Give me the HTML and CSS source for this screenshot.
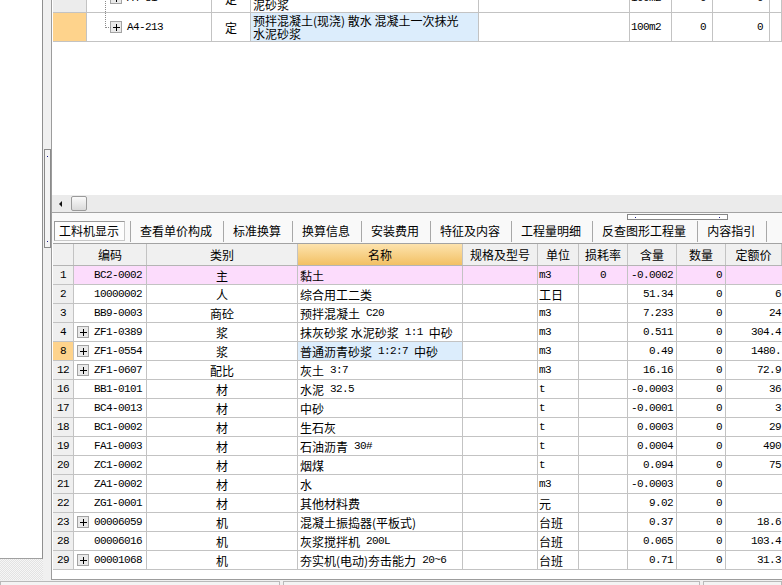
FILE: index.html
```html
<!DOCTYPE html>
<html lang="zh-CN">
<head>
<meta charset="utf-8">
<title>工料机显示</title>
<link rel="stylesheet" href="styles.css">
</head>
<body>
<div class="app">
  <div class="side">
    <div class="side-panel"></div>
    <div class="side-foot"></div>
  </div>
  <div class="split"><div class="grip-v"></div></div>
  <div class="main">
    <div class="upper">
      <div class="ugrid">
        <div class="urow">
          <div class="uc un"></div>
          <div class="uc ucode tree-full"><svg class="pb" width="12" height="12" viewBox="0 0 12 12"><rect x=".5" y=".5" width="11" height="11" fill="#e9e9e9" stroke="#a3a3a3"/><path d="M3 6.5h7M6.5 3v7" stroke="#000"/></svg><span class="m">A4-81</span></div>
          <div class="uc ut">定</div>
          <div class="uc unm">预拌混凝土(现浇) 台阶 混凝土一次抹光水<br>泥砂浆</div>
          <div class="uc"></div>
          <div class="uc uu m">100m2</div>
          <div class="uc ur m">0</div>
          <div class="uc ur m">0</div>
          <div class="uc"></div>
        </div>
        <div class="urow sel">
          <div class="uc un"></div>
          <div class="uc ucode tree-last"><svg class="pb" width="12" height="12" viewBox="0 0 12 12"><rect x=".5" y=".5" width="11" height="11" fill="#e9e9e9" stroke="#a3a3a3"/><path d="M3 6.5h7M6.5 3v7" stroke="#000"/></svg><span class="m">A4-213</span></div>
          <div class="uc ut">定</div>
          <div class="uc unm">预拌混凝土(现浇) 散水 混凝土一次抹光<br>水泥砂浆</div>
          <div class="uc"></div>
          <div class="uc uu m">100m2</div>
          <div class="uc ur m">0</div>
          <div class="uc ur m">0</div>
          <div class="uc"></div>
        </div>
      </div>
    </div>
    <div class="hscroll"><span class="arrow"></span><span class="thumb"></span></div>
    <div class="tabs">
      <div class="tab on">工料机显示</div><i class="sep"></i>
      <div class="tab">查看单价构成</div><i class="sep"></i>
      <div class="tab">标准换算</div><i class="sep"></i>
      <div class="tab">换算信息</div><i class="sep"></i>
      <div class="tab">安装费用</div><i class="sep"></i>
      <div class="tab">特征及内容</div><i class="sep"></i>
      <div class="tab">工程量明细</div><i class="sep"></i>
      <div class="tab">反查图形工程量</div><i class="sep"></i>
      <div class="tab">内容指引</div><i class="sep"></i>
      <div class="grip-h"></div>
    </div>
    <div class="lgrid">
      <div class="lhead">
        <div class="h"></div>
        <div class="h">编码</div>
        <div class="h">类别</div>
        <div class="h hot">名称</div>
        <div class="h">规格及型号</div>
        <div class="h">单位</div>
        <div class="h">损耗率</div>
        <div class="h">含量</div>
        <div class="h">数量</div>
        <div class="h">定额价</div>
      </div>

      <div class="lrow pink">
        <div class="c n m">1</div>
        <div class="c code"><i class="slot"></i><span class="m">BC2-0002</span></div>
        <div class="c t">主</div>
        <div class="c nm">黏土</div>
        <div class="c"></div>
        <div class="c u m">m3</div>
        <div class="c z m">0</div>
        <div class="c r m">-0.0002</div>
        <div class="c r m">0</div>
        <div class="c rr m"></div>
      </div>
      <div class="lrow">
        <div class="c n m">2</div>
        <div class="c code"><i class="slot"></i><span class="m">10000002</span></div>
        <div class="c t">人</div>
        <div class="c nm">综合用工二类</div>
        <div class="c"></div>
        <div class="c u">工日</div>
        <div class="c z m"></div>
        <div class="c r m">51.34</div>
        <div class="c r m">0</div>
        <div class="c rr m">6</div>
      </div>
      <div class="lrow">
        <div class="c n m">3</div>
        <div class="c code"><i class="slot"></i><span class="m">BB9-0003</span></div>
        <div class="c t">商砼</div>
        <div class="c nm">预拌混凝土<span class="m">&nbsp;C20</span></div>
        <div class="c"></div>
        <div class="c u m">m3</div>
        <div class="c z m"></div>
        <div class="c r m">7.233</div>
        <div class="c r m">0</div>
        <div class="c rr m">24</div>
      </div>
      <div class="lrow">
        <div class="c n m">4</div>
        <div class="c code"><svg class="pb" width="12" height="12" viewBox="0 0 12 12"><rect x=".5" y=".5" width="11" height="11" fill="#e9e9e9" stroke="#a3a3a3"/><path d="M3 6.5h7M6.5 3v7" stroke="#000"/></svg><span class="m">ZF1-0389</span></div>
        <div class="c t">浆</div>
        <div class="c nm">抹灰砂浆 水泥砂浆<span class="m">&nbsp;1:1&nbsp;</span>中砂</div>
        <div class="c"></div>
        <div class="c u m">m3</div>
        <div class="c z m"></div>
        <div class="c r m">0.511</div>
        <div class="c r m">0</div>
        <div class="c rr m">304.4</div>
      </div>
      <div class="lrow cur">
        <div class="c n m">8</div>
        <div class="c code"><svg class="pb" width="12" height="12" viewBox="0 0 12 12"><rect x=".5" y=".5" width="11" height="11" fill="#e9e9e9" stroke="#a3a3a3"/><path d="M3 6.5h7M6.5 3v7" stroke="#000"/></svg><span class="m">ZF1-0554</span></div>
        <div class="c t">浆</div>
        <div class="c nm">普通沥青砂浆<span class="m">&nbsp;1:2:7&nbsp;</span>中砂</div>
        <div class="c"></div>
        <div class="c u m">m3</div>
        <div class="c z m"></div>
        <div class="c r m">0.49</div>
        <div class="c r m">0</div>
        <div class="c rr m">1480.</div>
      </div>
      <div class="lrow">
        <div class="c n m">12</div>
        <div class="c code"><svg class="pb" width="12" height="12" viewBox="0 0 12 12"><rect x=".5" y=".5" width="11" height="11" fill="#e9e9e9" stroke="#a3a3a3"/><path d="M3 6.5h7M6.5 3v7" stroke="#000"/></svg><span class="m">ZF1-0607</span></div>
        <div class="c t">配比</div>
        <div class="c nm">灰土<span class="m">&nbsp;3:7</span></div>
        <div class="c"></div>
        <div class="c u m">m3</div>
        <div class="c z m"></div>
        <div class="c r m">16.16</div>
        <div class="c r m">0</div>
        <div class="c rr m">72.9</div>
      </div>
      <div class="lrow">
        <div class="c n m">16</div>
        <div class="c code"><i class="slot"></i><span class="m">BB1-0101</span></div>
        <div class="c t">材</div>
        <div class="c nm">水泥<span class="m">&nbsp;32.5</span></div>
        <div class="c"></div>
        <div class="c u m">t</div>
        <div class="c z m"></div>
        <div class="c r m">-0.0003</div>
        <div class="c r m">0</div>
        <div class="c rr m">36</div>
      </div>
      <div class="lrow">
        <div class="c n m">17</div>
        <div class="c code"><i class="slot"></i><span class="m">BC4-0013</span></div>
        <div class="c t">材</div>
        <div class="c nm">中砂</div>
        <div class="c"></div>
        <div class="c u m">t</div>
        <div class="c z m"></div>
        <div class="c r m">-0.0001</div>
        <div class="c r m">0</div>
        <div class="c rr m">3</div>
      </div>
      <div class="lrow">
        <div class="c n m">18</div>
        <div class="c code"><i class="slot"></i><span class="m">BC1-0002</span></div>
        <div class="c t">材</div>
        <div class="c nm">生石灰</div>
        <div class="c"></div>
        <div class="c u m">t</div>
        <div class="c z m"></div>
        <div class="c r m">0.0003</div>
        <div class="c r m">0</div>
        <div class="c rr m">29</div>
      </div>
      <div class="lrow">
        <div class="c n m">19</div>
        <div class="c code"><i class="slot"></i><span class="m">FA1-0003</span></div>
        <div class="c t">材</div>
        <div class="c nm">石油沥青<span class="m">&nbsp;30#</span></div>
        <div class="c"></div>
        <div class="c u m">t</div>
        <div class="c z m"></div>
        <div class="c r m">0.0004</div>
        <div class="c r m">0</div>
        <div class="c rr m">490</div>
      </div>
      <div class="lrow">
        <div class="c n m">20</div>
        <div class="c code"><i class="slot"></i><span class="m">ZC1-0002</span></div>
        <div class="c t">材</div>
        <div class="c nm">烟煤</div>
        <div class="c"></div>
        <div class="c u m">t</div>
        <div class="c z m"></div>
        <div class="c r m">0.094</div>
        <div class="c r m">0</div>
        <div class="c rr m">75</div>
      </div>
      <div class="lrow">
        <div class="c n m">21</div>
        <div class="c code"><i class="slot"></i><span class="m">ZA1-0002</span></div>
        <div class="c t">材</div>
        <div class="c nm">水</div>
        <div class="c"></div>
        <div class="c u m">m3</div>
        <div class="c z m"></div>
        <div class="c r m">-0.0003</div>
        <div class="c r m">0</div>
        <div class="c rr m"></div>
      </div>
      <div class="lrow">
        <div class="c n m">22</div>
        <div class="c code"><i class="slot"></i><span class="m">ZG1-0001</span></div>
        <div class="c t">材</div>
        <div class="c nm">其他材料费</div>
        <div class="c"></div>
        <div class="c u">元</div>
        <div class="c z m"></div>
        <div class="c r m">9.02</div>
        <div class="c r m">0</div>
        <div class="c rr m"></div>
      </div>
      <div class="lrow">
        <div class="c n m">23</div>
        <div class="c code"><svg class="pb" width="12" height="12" viewBox="0 0 12 12"><rect x=".5" y=".5" width="11" height="11" fill="#e9e9e9" stroke="#a3a3a3"/><path d="M3 6.5h7M6.5 3v7" stroke="#000"/></svg><span class="m">00006059</span></div>
        <div class="c t">机</div>
        <div class="c nm">混凝土振捣器(平板式)</div>
        <div class="c"></div>
        <div class="c u">台班</div>
        <div class="c z m"></div>
        <div class="c r m">0.37</div>
        <div class="c r m">0</div>
        <div class="c rr m">18.6</div>
      </div>
      <div class="lrow">
        <div class="c n m">28</div>
        <div class="c code"><i class="slot"></i><span class="m">00006016</span></div>
        <div class="c t">机</div>
        <div class="c nm">灰浆搅拌机<span class="m">&nbsp;200L</span></div>
        <div class="c"></div>
        <div class="c u">台班</div>
        <div class="c z m"></div>
        <div class="c r m">0.065</div>
        <div class="c r m">0</div>
        <div class="c rr m">103.4</div>
      </div>
      <div class="lrow">
        <div class="c n m">29</div>
        <div class="c code"><svg class="pb" width="12" height="12" viewBox="0 0 12 12"><rect x=".5" y=".5" width="11" height="11" fill="#e9e9e9" stroke="#a3a3a3"/><path d="M3 6.5h7M6.5 3v7" stroke="#000"/></svg><span class="m">00001068</span></div>
        <div class="c t">机</div>
        <div class="c nm">夯实机(电动)夯击能力<span class="m">&nbsp;20~6</span></div>
        <div class="c"></div>
        <div class="c u">台班</div>
        <div class="c z m"></div>
        <div class="c r m">0.71</div>
        <div class="c r m">0</div>
        <div class="c rr m">31.3</div>
      </div>
    </div>
  </div>
</div>
<div class="status">
  <div class="seg s1"></div>
  <div class="seg s2"></div>
  <div class="seg s3"></div>
</div>
</body>
</html>
```

FILE: styles.css
```css
* { box-sizing: border-box; }
html, body { margin: 0; padding: 0; }
body {
  width: 782px;
  height: 585px;
  overflow: hidden;
  background: #f0f0f0;
  font-family: "Noto Sans CJK SC", "Noto Sans", sans-serif;
  font-size: 12px;
  color: #000;
  display: grid;
  grid-template-rows: 580px 5px;
}
.m {
  font-family: "Liberation Mono", "DejaVu Sans Mono", monospace;
  font-size: 11px;
  letter-spacing: -0.6px;
}

/* frame */
.app {
  display: grid;
  grid-template-columns: 43px 8px 731px;
  height: 580px;
}
.side { display: flex; flex-direction: column; }
.side-panel {
  height: 559px;
  background: #fff;
  border-right: 1px solid #8f8f8f;
  border-bottom: 1px solid #a0a0a0;
}
.side-foot {
  flex: 1;
  background: repeating-conic-gradient(#f6f6f6 0 25%, #e2e2e2 0 50%) 0 0 / 2px 2px;
}
.split {
  position: relative;
  background: #f0f0f0;
}
.grip-v {
  position: absolute;
  left: 1px;
  top: 149px;
  width: 7px;
  height: 99px;
  border: 1px solid #8a8a8a;
  background: #f4f4f4;
}
.grip-v::before, .grip-v::after {
  content: "";
  position: absolute;
  left: 2px;
  width: 1px;
  height: 1px;
  background: #1a1a8a;
}
.grip-v::before { top: 6px; }
.grip-v::after { bottom: 5px; }

.main {
  border-left: 1px solid #9c9c9c;
  border-bottom: 1px solid #9c9c9c;
  background: #fff;
  display: flex;
  flex-direction: column;
  overflow: hidden;
  min-width: 0;
}

/* upper grid */
.upper {
  flex: none;
  height: 195px;
  overflow: hidden;
  padding-left: 1px;
  background: #fff;
}
.ugrid { margin-top: -16px; }
.urow {
  display: grid;
  grid-template-columns: 34px 125px 39px 228px 151px 42px 41px 57px 1fr;
  height: 29px;
  border-bottom: 1px solid #c3c3c3;
}
.uc {
  border-right: 1px solid #c3c3c3;
  display: flex;
  align-items: center;
  overflow: hidden;
  white-space: nowrap;
  position: relative;
}
.un { background: #ececec; }
.urow.sel .un { background: #fed38c; }
.urow.sel .unm { background: #dcedfc; }
.ucode { padding-left: 23px; }
.ucode .pb { margin-right: 5px; flex: none; }
.tree-full::before, .tree-last::before {
  content: "";
  position: absolute;
  left: 18px;
  top: 0;
  width: 5px;
  border-left: 1px dotted #8c8c8c;
  border-bottom: 1px dotted #8c8c8c;
}
.tree-full::before { height: 14px; }
.tree-full::after {
  content: "";
  position: absolute;
  left: 18px;
  top: 14px;
  bottom: 0;
  border-left: 1px dotted #8c8c8c;
}
.tree-last::before { height: 14px; }
.ut { justify-content: center; }
.unm { padding-left: 2px; line-height: 13px; align-items: center; }
.uu { padding-left: 1px; }
.ur { justify-content: flex-end; padding-right: 6px; }

/* horizontal scrollbar */
.hscroll {
  flex: none;
  height: 18px;
  background: #ebebeb;
  border-bottom: 1px solid #a3a3a3;
  display: flex;
  align-items: center;
  padding-left: 7px;
}
.arrow {
  width: 0;
  height: 0;
  border-right: 3px solid #111;
  border-top: 3px solid transparent;
  border-bottom: 3px solid transparent;
}
.thumb {
  margin-left: 9px;
  width: 16px;
  height: 15px;
  border: 1px solid #9a9a9a;
  border-radius: 2px;
  background: linear-gradient(#fafafa, #dadada);
}

/* tabs */
.tabs {
  flex: none;
  height: 30px;
  background: #f9f9f9;
  display: flex;
  align-items: flex-end;
  padding: 0 0 2px 2px;
  position: relative;
}
.tab {
  height: 20px;
  line-height: 18px;
  padding: 0 11px 0 9px;
  border: 1px solid transparent;
  border-width: 1px 0;
  white-space: nowrap;
}
.tab.on {
  border: 1px solid #9a9a9a;
  border-right-color: #c8c8c8;
  border-bottom-color: #c8c8c8;
  background: #fdfdfd;
  padding: 0 5px 0 4px;
  margin-right: 5px;
}
.sep {
  display: block;
  width: 1px;
  height: 21px;
  margin-bottom: -1px;
  background: #a8a8a8;
  flex: none;
}
.grip-h {
  position: absolute;
  left: 575px;
  top: 1px;
  width: 101px;
  height: 6px;
  border: 1px solid #858585;
  background: #fff;
}
.grip-h::before, .grip-h::after {
  content: "";
  position: absolute;
  top: 2px;
  width: 1px;
  height: 1px;
  background: #1a1a8a;
}
.grip-h::before { left: 7px; }
.grip-h::after { right: 7px; }

/* lower grid */
.lgrid {
  flex: 1;
  padding-left: 1px;
  background: #fff;
}
.lhead, .lrow {
  display: grid;
  grid-template-columns: 21px 73px 151px 165px 75px 41px 49px 49px 49px 1fr;
}
.lhead {
  height: 23px;
  border-top: 1px solid #a3a3a3;
  border-bottom: 1px solid #b4b4b4;
  background: #f0f0f0;
}
.h {
  border-right: 1px solid #c3c3c3;
  display: flex;
  align-items: center;
  justify-content: center;
  white-space: nowrap;
  overflow: hidden;
}
.h.hot { background: linear-gradient(#fde3ae, #f2c063); }
.lrow {
  height: 19px;
  border-bottom: 1px solid #c3c3c3;
}
.c {
  border-right: 1px solid #c3c3c3;
  display: flex;
  align-items: center;
  white-space: nowrap;
  overflow: hidden;
}
.c.n { justify-content: center; background: #efefef; }
.lrow.cur .c.n { background: #fed38c; }
.lrow.cur .c.nm { background: #dcedfc; }
.lrow.pink .c:not(.n) { background: #fcdcfc; }
.code { padding-left: 3px; }
.code .pb, .code .slot { flex: none; width: 12px; height: 12px; margin-right: 5px; display: block; }
.t { justify-content: center; }
.nm { padding-left: 2px; }
.u { padding-left: 1px; }
.z { justify-content: center; }
.r { justify-content: flex-end; padding-right: 3px; }
.rr { justify-content: flex-end; padding-right: 1px; border-right: 0; }

/* status bar */
.status {
  display: flex;
  gap: 3px;
  background: #f0f0f0;
  padding-top: 1px;
}
.seg {
  border: 1px solid #b9b9b9;
  border-bottom: 0;
  background: #f4f4f4;
}
.s1 { width: 280px; }
.s2 { width: 417px; }
.s3 { flex: 1; }
```
